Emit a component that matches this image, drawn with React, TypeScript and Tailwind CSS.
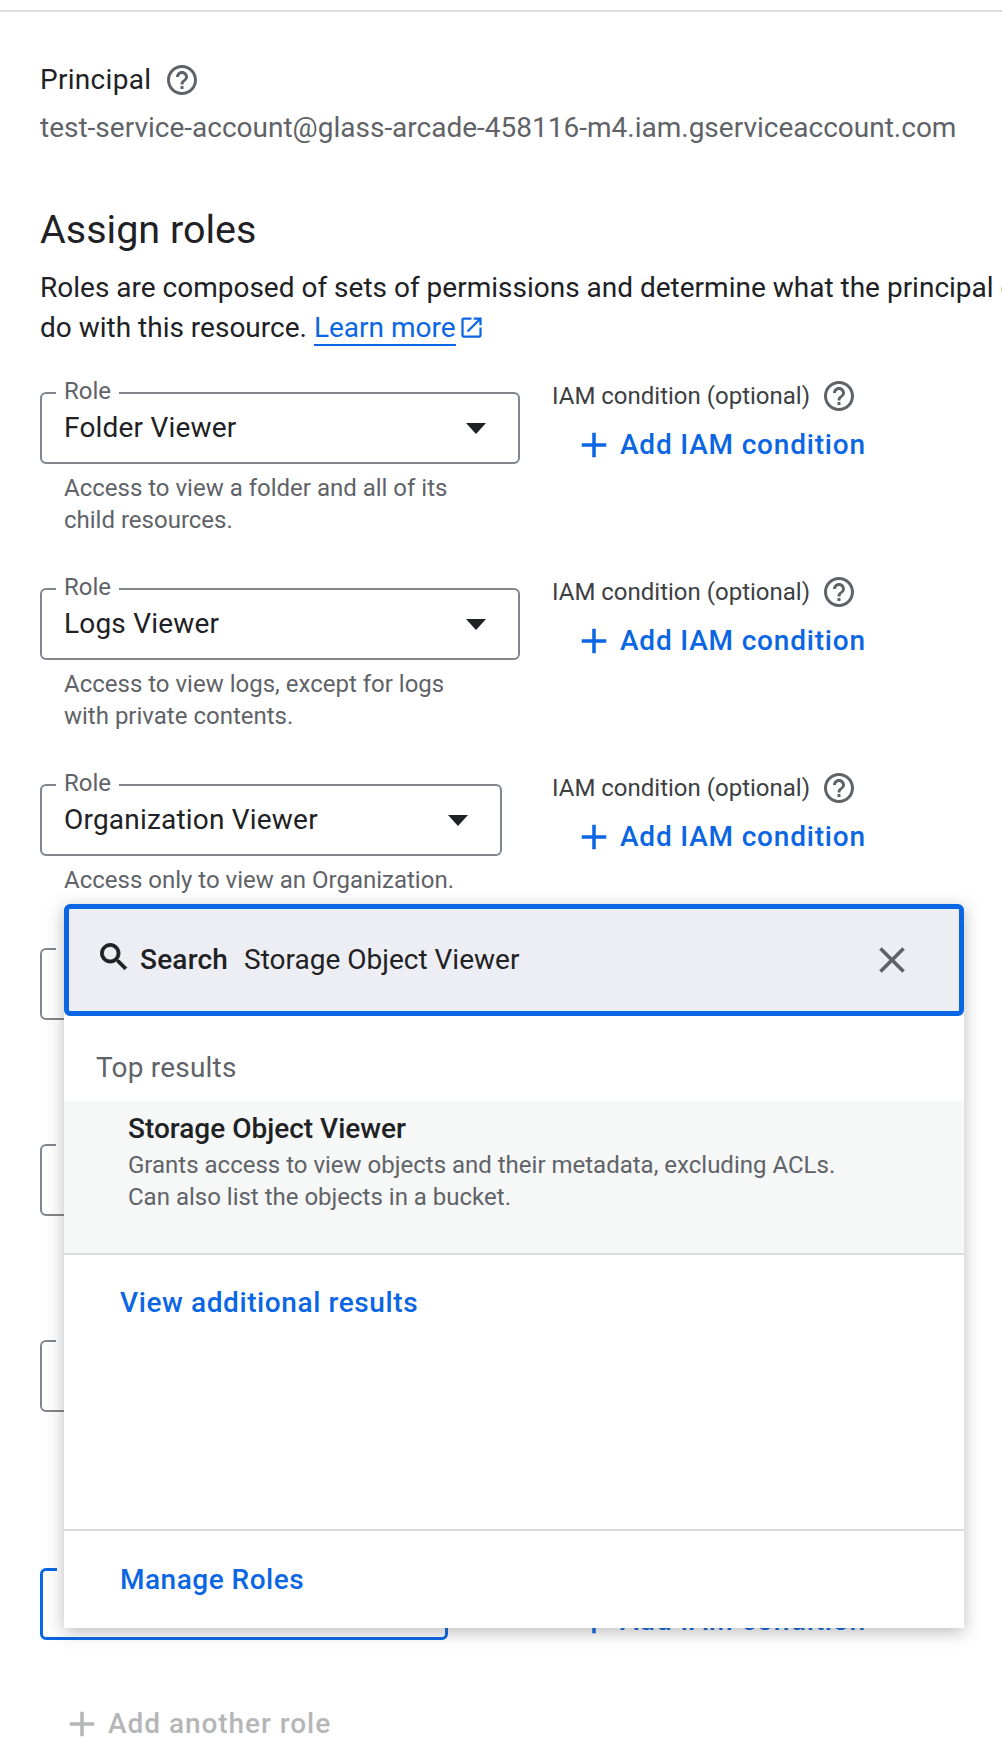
const PLUS = 'M19 13h-6v6h-2v-6H5v-2h6V5h2v6h6v2z';
const HELP =
  'M11 18h2v-2h-2v2zm1-16C6.48 2 2 6.48 2 12s4.48 10 10 10 10-4.48 10-10S17.52 2 12 2zm0 18c-4.41 0-8-3.59-8-8s3.59-8 8-8 8 3.59 8 8-3.59 8-8 8zm0-14c-2.21 0-4 1.79-4 4h2c0-1.1.9-2 2-2s2 .9 2 2c0 2-3 1.75-3 5h2c0-2.25 3-2.5 3-5 0-2.21-1.79-4-4-4z';
const SEARCH =
  'M15.5 14h-.79l-.28-.27C15.41 12.59 16 11.11 16 9.5 16 5.91 13.09 3 9.5 3S3 5.91 3 9.5 5.91 16 9.5 16c1.61 0 3.09-.59 4.23-1.57l.27.28v.79l5 4.99L20.49 19l-4.99-5zm-6 0C7.01 14 5 11.99 5 9.5S7.01 5 9.5 5 14 7.01 14 9.5 11.99 14 9.5 14z';
const CLOSE =
  'M19 6.41L17.59 5 12 10.59 6.41 5 5 6.41 10.59 12 5 17.59 6.41 19 12 13.41 17.59 19 19 17.59 13.41 12z';
const OPEN =
  'M19 19H5V5h7V3H5c-1.11 0-2 .9-2 2v14c0 1.1.89 2 2 2h14c1.1 0 2-.9 2-2v-7h-2v7zM14 3v2h3.59l-9.83 9.83 1.41 1.41L19 6.41V10h2V3h-7z';

const Icon = ({ d, className }: { d: string; className: string }) => (
  <svg viewBox="0 0 24 24" fill="currentColor" className={className}>
    <path d={d} />
  </svg>
);

type Role = { value?: string; hint: string[]; width: string; active?: boolean };

const roles: Role[] = [
  { value: 'Folder Viewer', hint: ['Access to view a folder and all of its', 'child resources.'], width: 'w-[480px]' },
  { value: 'Logs Viewer', hint: ['Access to view logs, except for logs', 'with private contents.'], width: 'w-[480px]' },
  { value: 'Organization Viewer', hint: ['Access only to view an Organization.'], width: 'w-[462px]' },
  { hint: ['\u00a0', '\u00a0'], width: 'w-[480px]' },
  { hint: ['\u00a0', '\u00a0'], width: 'w-[480px]' },
  { hint: ['\u00a0', '\u00a0', '\u00a0'], width: 'w-[480px]' },
  { hint: [], width: 'w-[408px]', active: true },
];

const RoleRow = ({ role }: { role: Role }) => (
  <div className="flex">
    <div className="w-[512px] shrink-0">
      <div
        className={`relative flex h-[72px] items-center justify-between rounded-[6px] pl-[22px] pr-[32px] ${role.width} ${
          role.active ? 'border-[3px] border-[#0b66e4]' : 'border-2 border-[#80868b]'
        }`}
      >
        <span className="absolute -top-[17px] left-[14px] bg-white px-[8px] text-[24px] leading-[28px] text-[#5f6368]">
          Role
        </span>
        <span className="text-[28px] tracking-[0.2px] text-[#202124]">{role.value}</span>
        <span className="h-0 w-0 border-x-[10px] border-t-[11px] border-x-transparent border-t-[#202124]" />
      </div>
      {role.hint.length > 0 && (
        <div className="mt-[8px] pl-[24px] text-[24px] leading-[32px] text-[#5f6368]">
          {role.hint.map((line, i) => (
            <div key={i}>{line}</div>
          ))}
        </div>
      )}
    </div>
    <div className="-mt-[12px]">
      <div className="flex h-[32px] items-center">
        <span className="text-[24px] text-[#3c4043]">IAM condition (optional)</span>
        <Icon d={HELP} className="ml-[11px] h-[36px] w-[36px] text-[#5f6368]" />
      </div>
      <div className="mt-[17px] flex h-[32px] items-center pl-[30px] text-[#0b66e4]">
        <Icon d={PLUS} className="h-[42px] w-[42px] -mx-[9px] shrink-0" />
        <span className="ml-[14px] text-[28px] font-medium tracking-[0.8px]">Add IAM condition</span>
      </div>
    </div>
  </div>
);

const SearchPanel = () => (
  <div className="absolute left-[64px] top-[904px] flex h-[724px] w-[900px] flex-col bg-white shadow-[0_4px_16px_rgba(60,64,67,0.35)]">
    <div className="flex h-[112px] items-center rounded-[6px] border-[5px] border-[#0b66e4] bg-[#edeef3] pl-[27px] pr-[45px] text-[#202124]">
      <Icon d={SEARCH} className="h-[36px] w-[36px] -mt-[6px] shrink-0 stroke-current stroke-[0.6]" />
      <span className="ml-[8px] text-[28px] font-medium tracking-[0.2px]">Search</span>
      <span className="ml-[16px] flex-1 text-[28px]">Storage Object Viewer</span>
      <Icon d={CLOSE} className="h-[44px] w-[44px] text-[#5f6368]" />
    </div>
    <div className="flex h-[85px] items-center pl-[32px] pt-[18px] text-[28px] tracking-[0.2px] text-[#5f6368]">Top results</div>
    <div className="h-[154px] border-b-2 border-[#dadce0] bg-[#f6f7f7] pl-[64px] pt-[10px]">
      <div className="text-[28px] font-medium leading-[36px] text-[#202124]">Storage Object Viewer</div>
      <div className="text-[24px] leading-[32px] text-[#5f6368]">
        <div className="mt-[2px]">Grants access to view objects and their metadata, excluding ACLs.</div>
        <div>Can also list the objects in a bucket.</div>
      </div>
    </div>
    <div className="flex-1 border-b-2 border-[#dadce0] pl-[56px] pt-[30px]">
      <div className="text-[28px] font-medium leading-[36px] tracking-[0.6px] text-[#0b66e4]">View additional results</div>
    </div>
    <div className="flex h-[97px] items-center pl-[56px] text-[28px] font-medium tracking-[0.5px] text-[#0b66e4]">Manage Roles</div>
  </div>
);

export default function App() {
  return (
    <div
      className="relative h-[1756px] w-[1002px] overflow-hidden bg-white pt-[10px]"
      style={{ fontFamily: 'Roboto, "Noto Sans", sans-serif' }}
    >
      <div className="border-t-2 border-[#dadce0]" />
      <div className="pl-[40px] pt-[48px]">
        <div className="flex h-[40px] items-center">
          <span className="text-[28px] tracking-[0.3px] text-[#202124]">Principal</span>
          <Icon d={HELP} className="ml-[13px] h-[36px] w-[36px] text-[#5f6368]" />
        </div>
        <div className="mt-[8px] whitespace-nowrap text-[28px] leading-[40px] text-[#5f6368]">
          test-service-account@glass-arcade-458116-m4.iam.gserviceaccount.com
        </div>
        <h1 className="mt-[57px] text-[39.5px] font-normal leading-[50px] text-[#202124]">Assign roles</h1>
        <p className="mt-[13px] whitespace-nowrap text-[28px] leading-[40px] text-[#202124]">
          Roles are composed of sets of permissions and determine what the principal can
          <br />
          do with this resource.{' '}
          <a className="border-b-2 border-[#0b66e4] text-[#0b66e4]">Learn more</a>
          <Icon d={OPEN} className="ml-[2px] inline h-[27px] w-[27px] align-[-4px] text-[#0b66e4]" />
        </p>
        <div className="mt-[44px] flex flex-col gap-[52px]">
          {roles.map((role, i) => (
            <RoleRow key={i} role={role} />
          ))}
        </div>
        <div className="mt-[64px] flex h-[40px] items-center text-[#b5b6b8]">
          <Icon d={PLUS} className="ml-[21px] h-[42px] w-[42px] shrink-0" />
          <span className="ml-[5px] text-[28px] font-medium tracking-[0.95px]">Add another role</span>
        </div>
      </div>
      <SearchPanel />
    </div>
  );
}
